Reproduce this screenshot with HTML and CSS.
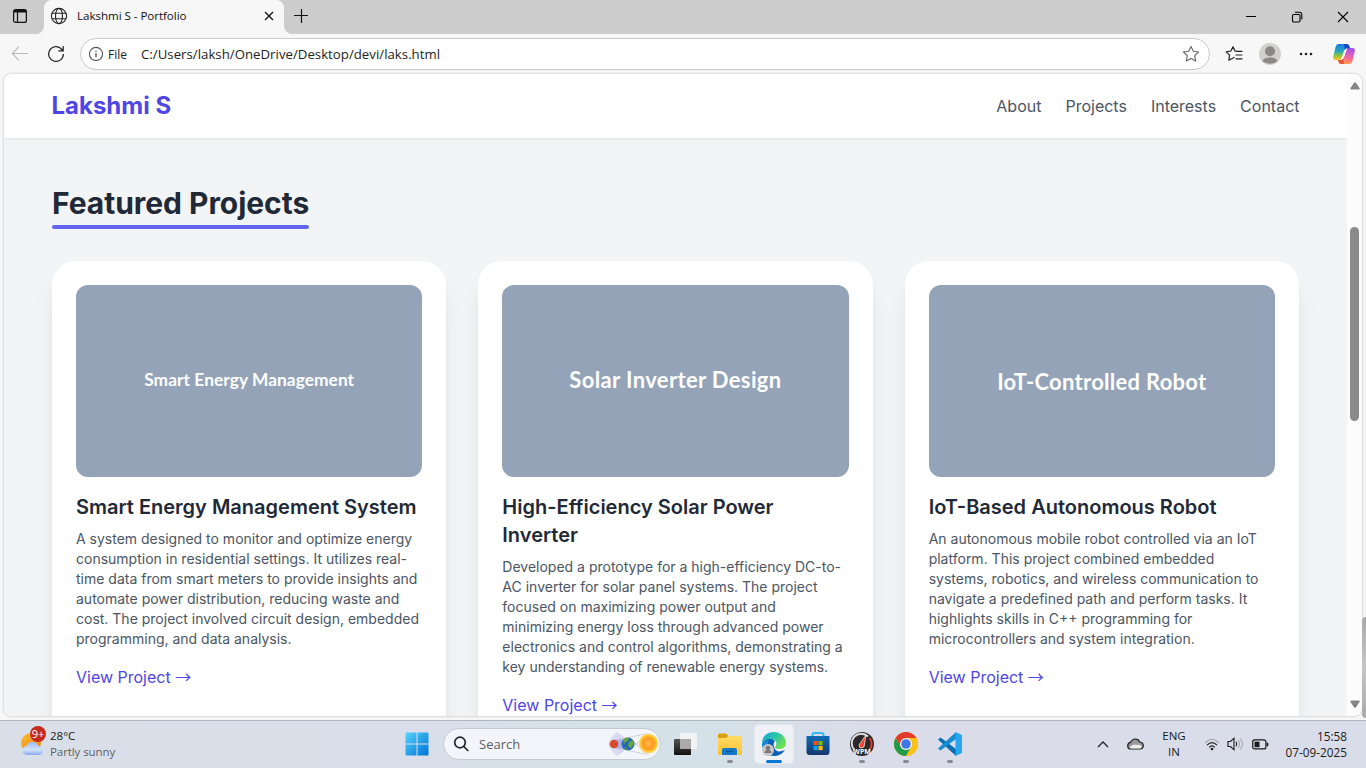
FILE: index.html
```html
<!DOCTYPE html>
<html lang="en">
<head>
<meta charset="utf-8">
<title>Lakshmi S - Portfolio</title>
<link rel="stylesheet" href="styles.css">
</head>
<body>
<div class="screen">
  <div class="tabs">
    <div class="tab-tools"><svg width="16" height="16" viewBox="0 0 16 16" fill="none" stroke="#111" stroke-width="1.2"><rect x="1.600" y="1.600" width="12.800" height="12.800" rx="2"/><path d="M2 3.200h12" stroke-width="2.600"/><path d="M5.500 4v10.500"/></svg></div>
    <div class="tab">
      <svg width="18" height="18" viewBox="0 0 18 18" fill="none" stroke="#222" stroke-width="1.1"><circle cx="9" cy="9" r="7.6"/><ellipse cx="9" cy="9" rx="3.5" ry="7.6"/><path d="M2 6.2h14M2 11.8h14"/></svg>
      <span class="tab-title">Lakshmi S - Portfolio</span>
      <svg class="tab-close" width="10" height="10" viewBox="0 0 10 10" stroke="#111" stroke-width="1.3"><path d="M1 1l8 8M9 1l-8 8"/></svg>
    </div>
    <svg class="plus" width="16" height="16" viewBox="0 0 16 16" stroke="#111" stroke-width="1.2"><path d="M1 7.500h14M8.500 1v14"/></svg>
    <div class="window-buttons">
      <svg width="12" height="12" viewBox="0 0 12 12" stroke="#000"><path d="M1 5.500h10"/></svg>
      <svg width="12" height="12" viewBox="0 0 12 12" fill="none" stroke="#000" stroke-width="1.1"><rect x="1.5" y="3.5" width="7.5" height="7.5" rx="1.2"/><path d="M4 1.3h4.6a2.2 2.2 0 0 1 2.2 2.2v5"/></svg>
      <svg width="12" height="12" viewBox="0 0 12 12" stroke="#000" stroke-width="1.1"><path d="M1 1l10 10M11 1L1 11"/></svg>
    </div>
  </div>

  <div class="toolbar">
    <svg class="back" width="18" height="16" viewBox="0 0 18 16" fill="none" stroke="#b9b9b9" stroke-width="1.1"><path d="M17 7.500H1.500M8 .7L1.200 7.500 8 14.300"/></svg>
    <svg class="reload" width="18" height="18" viewBox="0 0 18 18" fill="none" stroke="#222" stroke-width="1.2"><path d="M16.4 9A7.4 7.4 0 1 1 13.9 3.5L16 5.6M16.2 1v4.8h-4.8"/></svg>
    <div class="address">
      <svg width="16" height="16" viewBox="0 0 16 16" fill="none" stroke="#555" stroke-width="1.1"><circle cx="8" cy="8" r="6.6"/><path d="M8 7v4.3M8 4.4v1.3" stroke-width="1.3"/></svg>
      <span class="scheme">File</span>
      <span class="url">C:/Users/laksh/OneDrive/Desktop/devi/laks.html</span>
      <svg class="star" width="18" height="18" viewBox="0 0 18 18" fill="none" stroke="#666" stroke-width="1.1" stroke-linejoin="round"><path d="M9 1.5l2.3 4.8 5.3.7-3.9 3.7 1 5.4L9 13.5l-4.7 2.6 1-5.4L1.4 7l5.3-.7z"/></svg>
    </div>
    <svg class="favorites" width="18" height="18" viewBox="0 0 18 18" fill="none" stroke="#222" stroke-width="1.2" stroke-linejoin="round" stroke-linecap="round"><path d="M11.2 6.2L10 6 8 1.7 5.9 6l-4.7.8 3.4 3.4-.8 5L8 13l1-.6M11.5 6.3H17M11 10h6M11 13.8h6"/></svg>
    <svg class="profile" width="22" height="22" viewBox="0 0 22 22"><circle cx="11" cy="11" r="11" fill="#d2d0cd"/><circle cx="11" cy="8.3" r="5" fill="#8c8884"/><path d="M3.600 18C5 13.400 17 13.400 18.400 18a11 11 0 0 1-14.800 0z" fill="#8c8884"/></svg>
    <svg class="more" width="14" height="4" viewBox="0 0 14 4" fill="#222"><circle cx="2" cy="2" r="1.3"/><circle cx="7" cy="2" r="1.3"/><circle cx="12" cy="2" r="1.3"/></svg>
    <svg class="copilot" width="22" height="20" viewBox="0 0 22 20"><defs><linearGradient id="cl" x1="0" y1="0" x2="0" y2="1"><stop offset="0" stop-color="#1b7ae0"/><stop offset=".45" stop-color="#26a8c0"/><stop offset=".72" stop-color="#8cc63f"/><stop offset="1" stop-color="#ffc315"/></linearGradient><linearGradient id="cr" x1=".6" y1="0" x2=".4" y2="1"><stop offset="0" stop-color="#9d50ee"/><stop offset=".45" stop-color="#e661b8"/><stop offset=".75" stop-color="#f97880"/><stop offset="1" stop-color="#ffa64d"/></linearGradient></defs><path d="M5.500 0H15L13 5Q11.500 5.500 11 7L9 13Q8 16 5 16H2.500Q-.5 16 .3 12.500L2.500 3Q3.300 0 5.500 0z" fill="url(#cl)"/><path d="M11 0h3q2 0 2.600 2.500L17.300 5H14q-1.600 0-2.200 1.300z" fill="#174bc5"/><path d="M16.500 20H7L9 15q1.500-.5 2-2L13 7q1-3 4-3h2.500q3 0 2.200 3.500L19.500 17q-.8 3-3 3z" fill="url(#cr)"/><path d="M11 20H8q-2 0-2.600-2.500L4.900 16H7q2.400 0 3.200-2.300z" fill="#e9543b"/><path d="M12 6.500Q12.500 5 14 4.700 13 6 12.500 7.500L10.500 13q-.6 2-2 2.600L9.500 13z" fill="#fff" stroke="#fff" stroke-width=".8"/></svg>
  </div>

  <div class="stage">
    <div class="frame">
      <div class="page">
        <header class="site-header">
          <div class="brand">Lakshmi S</div>
          <nav class="nav"><a>About</a><a>Projects</a><a>Interests</a><a>Contact</a></nav>
        </header>
        <main class="content">
          <h2 class="heading">Featured Projects</h2>
          <div class="cards">
            <article class="card">
              <div class="thumb thumb-energy">Smart Energy Management</div>
              <h3>Smart Energy Management System</h3>
              <p>A system designed to monitor and optimize energy<br>consumption in residential settings. It utilizes real-<br>time data from smart meters to provide insights and<br>automate power distribution, reducing waste and<br>cost. The project involved circuit design, embedded<br>programming, and data analysis.</p>
              <a class="link">View Project <span class="arrow">→</span></a>
            </article>
            <article class="card">
              <div class="thumb thumb-solar">Solar Inverter Design</div>
              <h3>High-Efficiency Solar Power<br>Inverter</h3>
              <p>Developed a prototype for a high-efficiency DC-to-<br>AC inverter for solar panel systems. The project<br>focused on maximizing power output and<br>minimizing energy loss through advanced power<br>electronics and control algorithms, demonstrating a<br>key understanding of renewable energy systems.</p>
              <a class="link">View Project <span class="arrow">→</span></a>
            </article>
            <article class="card">
              <div class="thumb thumb-robot">IoT-Controlled Robot</div>
              <h3>IoT-Based Autonomous Robot</h3>
              <p>An autonomous mobile robot controlled via an IoT<br>platform. This project combined embedded<br>systems, robotics, and wireless communication to<br>navigate a predefined path and perform tasks. It<br>highlights skills in C++ programming for<br>microcontrollers and system integration.</p>
              <a class="link">View Project <span class="arrow">→</span></a>
            </article>
          </div>
        </main>
      </div>
      <div class="scrollbar">
        <svg width="10" height="8" viewBox="0 0 10 8" fill="#858585"><path d="M4 .8Q5-.3 6 .8L9.500 6q.5 1.500-1 1.500h-7Q0 7.500.5 6z"/></svg>
        <div class="scroll-thumb"></div>
        <svg width="10" height="8" viewBox="0 0 10 8" fill="#858585"><path d="M4 7.200Q5 8.300 6 7.200L9.500 2Q10 .5 8.500.5h-7Q0 .5.500 2z"/></svg>
      </div>
    </div>
    <div class="edge-handle"></div>
  </div>

  <div class="taskbar">
    <div class="weather">
      <svg width="28" height="30" viewBox="0 0 28 30"><defs><linearGradient id="sun" x1="0" y1="0" x2="1" y2="1"><stop offset="0" stop-color="#f9bd2f"/><stop offset="1" stop-color="#ed7d18"/></linearGradient><linearGradient id="cloud" x1="0" y1="0" x2="0" y2="1"><stop offset="0" stop-color="#9bbcf5"/><stop offset=".6" stop-color="#d3e3fb"/><stop offset="1" stop-color="#84aaf0"/></linearGradient></defs><circle cx="11" cy="17" r="10" fill="url(#sun)"/><path d="M7 29a4.500 4.500 0 0 1-.5-9 6.500 6.500 0 0 1 12 0 4.500 4.500 0 0 1 .5 9z" fill="url(#cloud)"/><circle cx="18" cy="8" r="8" fill="#c42b1c"/><text x="18" y="12" text-anchor="middle" class="badge-text">9+</text></svg>
      <div class="weather-text"><span>28°C</span><span class="muted">Partly sunny</span></div>
    </div>
    <svg class="start" width="24" height="24" viewBox="0 0 24 24"><defs><linearGradient id="win" x1="0" y1="0" x2="1" y2="1"><stop offset="0" stop-color="#55d3ff"/><stop offset="1" stop-color="#0071d1"/></linearGradient></defs><path d="M1.500.5H11.500V11.500H.5V1.500q0-1 1-1zM12.500.5H22.500q1 0 1 1V11.500H12.500zM.5 12.500H11.500V23.500H1.500q-1 0-1-1zM12.500 12.500H23.500V22.500q0 1-1 1H12.500z" fill="url(#win)"/></svg>
    <div class="search">
      <svg width="16" height="16" viewBox="0 0 16 16" fill="none" stroke="#222" stroke-width="1.7" stroke-linecap="round"><circle cx="7" cy="6.500" r="5.300"/><path d="M10.800 10.500l4 4"/></svg>
      <span class="search-text">Search</span>
      <svg class="planets" width="54" height="28" viewBox="0 0 54 28"><defs><radialGradient id="sol"><stop offset="0" stop-color="#ffb54a"/><stop offset=".6" stop-color="#fb9a22"/><stop offset=".8" stop-color="#ffc62e"/><stop offset="1" stop-color="#ffe07a"/></radialGradient><linearGradient id="halo"><stop offset="0" stop-color="#e0e2f6"/><stop offset="1" stop-color="#cfd2f1"/></linearGradient></defs><path d="M2 14Q3 8 11 2q7 4 10 9v6q-3 5-10 9Q3 20 2 14z" fill="url(#halo)"/><path d="M7 10l15-2v12L7 18z" fill="#b0b3e9"/><path d="M23 7.500Q32 5 42 4M23 20.500Q32 23 42 24M27 11l10 9M27 17l10-9" fill="none" stroke="#999" stroke-width=".7" stroke-dasharray="1.500 1"/><circle cx="8" cy="14" r="4.300" fill="#d94a2b"/><circle cx="22" cy="14" r="6.500" fill="#2568b6"/><path d="M17 10q3-4 6-2l-1 3-3 1-1 3zM23 12l4-2 1 4-3 4-3-2zM18 17l3 1v2z" fill="#69a83a"/><circle cx="42.500" cy="13.500" r="9.800" fill="url(#sol)"/></svg>
    </div>
    <div class="apps">
      <div class="app"><svg width="24" height="24" viewBox="0 0 24 24"><defs><linearGradient id="dk" x1="0" y1="0" x2="0" y2="1"><stop offset="0" stop-color="#555"/><stop offset="1" stop-color="#111"/></linearGradient></defs><rect x="0" y="7" width="17" height="16" rx="1" fill="url(#dk)"/><rect x="6" y="1" width="17" height="16" rx="1" fill="#f4f4f4" opacity=".92"/><path d="M6 7h11v10H6z" fill="#aaa"/></svg></div>
      <div class="app running"><svg width="26" height="24" viewBox="0 0 26 24"><defs><linearGradient id="fold" x1="0" y1="0" x2="0" y2="1"><stop offset="0" stop-color="#ffdc68"/><stop offset="1" stop-color="#ffc02c"/></linearGradient></defs><path d="M1 3q0-1.500 1.500-1.500H9L11.500 4H23q2 0 2 1.500V9H1z" fill="#dda00b"/><path d="M1 6h8l2.500-2H25v19H1z" fill="url(#fold)"/><path d="M5 23v-5q0-2 2-2h11q2 0 2 2v5z" fill="#147ac8"/><path d="M9 19.500h7" stroke="#075495" stroke-width="1.300"/></svg></div>
      <div class="app running active"><svg width="26" height="26" viewBox="0 0 26 26"><defs><linearGradient id="eg" x1="0" y1="0" x2="1" y2=".6"><stop offset="0" stop-color="#169fdb"/><stop offset=".5" stop-color="#27c4ae"/><stop offset="1" stop-color="#72df4d"/></linearGradient></defs><path d="M1 13q1 11 12 12 7 0 11-6-9 4-11-3-1-4 1-6-7-7-13 3z" fill="#0b62b7"/><path d="M1 13C1 5 6 1 13 1s12 5 12 11c0 4-3 6-7 6-3 0-4-1-4-2 3-3 1-8-4-8-4 0-8 2-9 5z" fill="url(#eg)"/><path d="M7 12q-1 6 3 10l3 3Q2 24 1 13q2-3 7-4z" fill="#1687d9"/><circle cx="7" cy="19" r="6" fill="#c7c7c7"/><circle cx="7" cy="17" r="2.300" fill="#777"/><path d="M3.500 22q0-3 3.500-3t3.500 3z" fill="#777"/></svg></div>
      <div class="app"><svg width="24" height="26" viewBox="0 0 24 26"><defs><linearGradient id="sto" x1="0" y1="0" x2="0" y2="1"><stop offset="0" stop-color="#0b6cb5"/><stop offset="1" stop-color="#17366c"/></linearGradient></defs><path d="M6.500 7V4q0-2 2-2h7q2 0 2 2v3" fill="none" stroke="#35b6ef" stroke-width="2"/><path d="M.5 5h23v16q0 3-3 3h-17q-3 0-3-3z" fill="url(#sto)"/><path d="M7.500 10H11.700V14.200H7.500z" fill="#f25022"/><path d="M12.500 10H16.700V14.200h-4.200z" fill="#7fba00"/><path d="M7.500 15H11.700v4.200H7.500z" fill="#00a4ef"/><path d="M12.500 15H16.700v4.200h-4.200z" fill="#ffb900"/></svg></div>
      <div class="app running"><svg width="26" height="26" viewBox="0 0 26 26"><circle cx="13" cy="13" r="12" fill="#292929"/><path d="M5.500 19A9.500 9.500 0 0 1 19 5.500" fill="none" stroke="#ddd" stroke-width="2"/><path d="M20.500 7A9.500 9.500 0 0 1 21 18" fill="none" stroke="#df3c2c" stroke-width="2"/><path d="M17 4l-2 12-4 1-1-3z" fill="#f04030" stroke="#fff" stroke-width=".7"/><text x="13" y="22.500" text-anchor="middle" class="wpm-text">WPM</text></svg></div>
      <div class="app running"><svg width="24" height="24" viewBox="0 0 24 24"><circle cx="12" cy="12" r="12" fill="#fbc116"/><path d="M1.600 6A12 12 0 0 1 22.400 6H12L6.800 15z" fill="#e33b2e"/><path d="M1.600 6A12 12 0 0 0 12 24l5.200-9H6.800z" fill="#219b4b"/><path d="M22.400 6H12v6l5.200 3L12 24A12 12 0 0 0 22.400 6z" fill="#fbc116"/><circle cx="12" cy="12" r="6" fill="#fff"/><circle cx="12" cy="12" r="4.800" fill="#3f76e8"/></svg></div>
      <div class="app running"><svg width="26" height="26" viewBox="0 0 26 26"><path d="M1 8.500L3.500 6.500 19 18v7z" fill="#0a6eb2"/><path d="M1 17.500L3.500 19.500 19 8V1z" fill="#168bd0"/><path d="M18.500 1L25 4v18l-6.500 3z" fill="#26a6ee"/></svg></div>
    </div>
    <div class="tray">
      <svg class="chevron" width="12" height="8" viewBox="0 0 12 8" fill="none" stroke="#222" stroke-width="1.300"><path d="M1 7l5-5 5 5"/></svg>
      <svg class="cloud" width="17" height="12" viewBox="0 0 17 12" stroke="#1b1b1b" stroke-width="1.200"><path d="M4 11Q.7 11 .7 7.800.8 5 3.800 4.200 5 1 8.500 1q3 0 4.300 3 3.400.4 3.500 3.600Q16.200 11 13 11z" fill="#999"/><path d="M2.500 9.800Q6 5 10 7q3-1 5 2-1 1.400-2 1.400H4q-1 0-1.500-.6z" fill="#eee" stroke="none"/></svg>
      <div class="language"><span>ENG</span><span>IN</span></div>
      <svg class="wifi" width="16" height="13" viewBox="0 0 16 13" fill="none" stroke="#1b1b1b" stroke-width="1.200"><path d="M1 5Q8-2.500 15 5" stroke="#aaa"/><path d="M3 7.200q5-5 10 0M5.200 9.300q2.800-2.800 5.600 0"/><circle cx="8" cy="11" r="1.300" fill="#1b1b1b" stroke="none"/></svg>
      <svg class="volume" width="17" height="14" viewBox="0 0 17 14" fill="none" stroke="#1b1b1b" stroke-width="1.100"><path d="M1 4.500h2.500L7 1.300v11.400L3.500 9.500H1z"/><path d="M9 4.800q1.500 2.200 0 4.400"/><path d="M11 3q3 4 0 8M13.300 1.300q4 5.700 0 11.400" stroke="#aaa"/></svg>
      <svg class="battery" width="17" height="11" viewBox="0 0 17 11" fill="none" stroke="#1b1b1b" stroke-width="1.200"><rect x=".7" y=".9" width="13.200" height="9" rx="2"/><path d="M2.500 2.700h5v5.500h-5z" fill="#1b1b1b" stroke="none"/><path d="M15.500 3.700v3.500" stroke-width="1.600"/></svg>
      <div class="clock"><span>15:58</span><span>07-09-2025</span></div>
    </div>
  </div>
</div>
</body>
</html>
```
FILE: styles.css
```css
* { box-sizing: border-box; }
body { margin: 0; overflow: hidden; font-family: "Open Sans", "Noto Sans", sans-serif; }
svg { display: block; flex: none; }
.screen { width: 1366px; height: 768px; display: flex; flex-direction: column; overflow: hidden; background: #f7f7f7; }

.tabs { height: 34px; flex: none; display: flex; background: linear-gradient(#cdcdcd 0 20px, #f7f7f7 20px); }
.tab-tools { width: 44px; background: #cdcdcd; border-bottom-right-radius: 8px; padding: 8px 0 0 12px; }
.tab { width: 240px; display: flex; align-items: center; padding: 0 10px 2px 6px; background: #f7f7f7; border-radius: 8px 8px 0 0; }
.tab-title { margin-left: 9px; padding-bottom: 1px; font-size: 11.6px; color: #111; white-space: nowrap; letter-spacing: -0.05px; }
.tab-close { margin-left: auto; }
.plus { width: 33px; height: 34px; padding: 8px 8px 10px 9px; background: #cdcdcd; border-bottom-left-radius: 8px; }
.window-buttons { flex: 1; background: #cdcdcd; display: flex; justify-content: flex-end; align-items: center; gap: 34px; padding-right: 17px; }

.toolbar { height: 40px; flex: none; display: flex; align-items: center; padding-left: 11px; }
.reload { margin-left: 18px; }
.address { margin-left: 15px; width: 1130px; height: 32px; border: 1px solid #cacaca; border-radius: 16px; background: #fff; display: flex; align-items: center; padding: 0 9px 0 7px; color: #222; white-space: nowrap; }
.scheme { margin-left: 4px; font-size: 12px; width: 33px; }
.url { font-size: 13.2px; letter-spacing: 0.03px; }
.star { margin-left: auto; }
.favorites { margin-left: 15px; }
.profile { margin-left: 16px; }
.more { margin-left: 18px; }
.copilot { margin-left: 20px; }

.stage { height: 646px; flex: none; padding: 0 4px 4px; position: relative; }
.frame { height: 642px; display: flex; border-radius: 8px; overflow: hidden; box-shadow: 0 0 2px 1px #d9d9d9; background: #fcfcfc; }
.page { width: 1343px; height: 642px; overflow: hidden; background: #f3f4f6; font-family: Inter, sans-serif; }
.scrollbar { width: 15px; display: flex; flex-direction: column; align-items: center; padding: 8px 0; }
.scroll-thumb { width: 9px; height: 194px; border-radius: 5px; background: #8b8b8b; margin: 137px 0 auto; }
.edge-handle { position: absolute; left: 1362px; top: 543px; width: 8px; height: 101px; border-radius: 5px; background: linear-gradient(#aaa, #c5c5c5 50%, #aaa); }

.site-header { height: 64px; background: #fff; display: flex; align-items: center; justify-content: space-between; padding: 0 47.5px 0 48px; box-shadow: 0 1px 2px rgb(0 0 0 / 8%); position: relative; }
.brand { margin-left: -0.5px; font-size: 24px; line-height: 32px; font-weight: 700; color: #4f46e5; }
.nav { display: flex; gap: 24px; font-size: 16px; line-height: 24px; color: #4b5563; }
.content { padding: 48px 48px 0; }
.heading { width: 257px; margin: 0 0 32px; font-size: 30px; line-height: 35px; letter-spacing: -0.04px; font-weight: 700; color: #1f2937; white-space: nowrap; }
.heading::after { content: ""; display: block; height: 4px; margin-top: 4px; border-radius: 2px; background: #6366f1; }
.cards { display: grid; grid-template-columns: repeat(3, 1fr); gap: 32px; }
.card { padding: 24px; border-radius: 24px; background: #fff; box-shadow: 0 20px 25px -5px rgb(0 0 0 / 10%), 0 8px 10px -6px rgb(0 0 0 / 10%); }
.thumb { height: 192px; margin-bottom: 16px; border-radius: 12px; background: #94a3b8; color: #fff; font-family: Lato, sans-serif; font-weight: 700; display: flex; justify-content: center; align-items: center; white-space: nowrap; }
.thumb-energy { font-size: 17.3px; letter-spacing: 0.08px; padding-bottom: 3px; }
.thumb-solar { font-size: 22px; letter-spacing: 0.36px; padding-bottom: 4px; }
.thumb-robot { font-size: 22px; letter-spacing: 0.28px; }
.card h3 { margin: 0 0 8px; font-size: 20px; line-height: 28px; font-weight: 600; color: #1f2937; white-space: nowrap; }
.card p { margin: 0 0 16px; font-size: 14px; line-height: 20px; color: #4b5563; white-space: nowrap; }
.link { display: block; height: 24px; font-size: 16px; line-height: 24px; color: #4f46e5; }
.arrow { font-family: "Noto Sans CJK SC", sans-serif; line-height: 1; }

.taskbar { height: 48px; flex: none; display: flex; align-items: center; padding-bottom: 1px; border-top: 1px solid #b2b5bb; background: linear-gradient(90deg, #d9dfe9 0%, #d9deea 30%, #d5e2e9 43%, #d4e1e9 52%, #dadde9 64%, #d9dde9 100%); color: #1b1b1b; font-size: 11.5px; }
.weather { width: 405px; padding-left: 20px; display: flex; align-items: center; gap: 2px; }
.weather svg { margin-top: -6px; }
.weather-text { display: flex; flex-direction: column; line-height: 16px; }
.muted { color: #5c5f66; letter-spacing: -0.08px; }
.badge-text { font: 11px "Open Sans", sans-serif; fill: #fff; }
.search { width: 218px; height: 32px; margin-left: 14px; border: 1px solid #c3c9d2; border-radius: 16px; background: #f3f5fa; display: flex; align-items: center; padding: 0 0 0 9px; }
.search-text { margin-left: 10px; font-size: 13px; color: #5e6065; }
.planets { margin-left: auto; }
.apps { display: flex; margin-left: 6px; }
.app { width: 38px; height: 38px; margin-right: 6px; border-radius: 4px; display: flex; align-items: center; justify-content: center; position: relative; }
.running::after { content: ""; position: absolute; bottom: 0; left: 16px; width: 6px; height: 3px; border-radius: 2px; background: #888a91; }
.active { background: #eff1f7; box-shadow: 0 0 0 1px #e4e6ed; }
.running.active::after { width: 16px; left: 11px; background: #0078d4; }
.wpm-text { font: bold 7px "Open Sans", sans-serif; fill: #fff; }
.tray { margin-left: auto; padding-right: 19px; display: flex; align-items: center; }
.cloud { margin-left: 18px; }
.language { margin-left: 16px; width: 28px; display: flex; flex-direction: column; align-items: center; line-height: 16px; }
.wifi { margin-left: 16px; }
.volume { margin-left: 7px; }
.battery { margin-left: 8px; }
.clock { width: 78px; font-size: 11.8px; display: flex; flex-direction: column; align-items: flex-end; line-height: 16px; }
```
